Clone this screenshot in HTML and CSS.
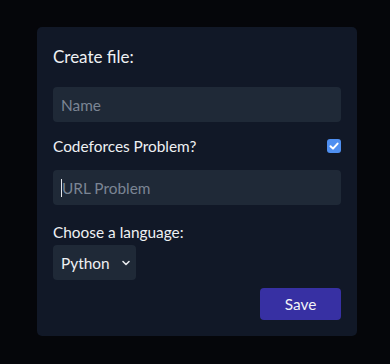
FILE: index.html
```html
<!DOCTYPE html>
<html>
<head>
<meta charset="utf-8">
<link rel="stylesheet" href="styles.css">
</head>
<body>
<div class="card">
  <h2 class="title">Create file:</h2>
  <input class="field" type="text" placeholder="Name">
  <label class="check-row">
    <span>Codeforces Problem?</span>
    <span class="checkbox">
      <svg viewBox="0 0 14 14" width="14" height="14"><path d="M3.5 7.2 L6 9.6 L10.6 4.6" fill="none" stroke="#fff" stroke-width="2" stroke-linecap="round" stroke-linejoin="round"/></svg>
    </span>
  </label>
  <div class="field url"><span class="caret"></span><span class="ph">URL Problem</span></div>
  <div class="label">Choose a language:</div>
  <div class="select">
    <span>Python</span>
    <svg viewBox="0 0 12 12" width="12" height="12"><path d="M3 4.5 L6 7.5 L9 4.5" fill="none" stroke="#e5e7eb" stroke-width="1.6" stroke-linecap="round" stroke-linejoin="round"/></svg>
  </div>
  <div class="actions"><button class="save">Save</button></div>
</div>
</body>
</html>
```
FILE: styles.css
```css
html, body {
  margin: 0;
  padding: 0;
  background: #05060a;
  height: 100%;
}
body {
  font-family: Lato, "Open Sans", sans-serif;
  color: #eef0f3;
  padding-top: 27px;
  padding-left: 37px;
  box-sizing: border-box;
}
.card {
  width: 320px;
  box-sizing: border-box;
  background: #111827;
  border-radius: 5px;
  padding: 16px 16px 16px 16px;
  display: flex;
  flex-direction: column;
}
.title {
  margin: 0;
  font-size: 17px;
  font-weight: 400;
  line-height: 28px;
  margin-bottom: 16px;
}
.field {
  display: block;
  width: 100%;
  height: 35px;
  box-sizing: border-box;
  background: #1f2937;
  border: none;
  border-radius: 4px;
  padding: 0 8px;
  font-family: inherit;
  font-size: 15.4px;
  color: #e5e7eb;
  outline: none;
}
.field::placeholder {
  color: #7b8594;
}
.check-row {
  display: flex;
  justify-content: space-between;
  align-items: center;
  height: 24px;
  margin: 12px 0 12px 0;
  font-size: 15.4px;
}
.checkbox {
  width: 14px;
  height: 14px;
  border-radius: 3px;
  background: #4f8ff0;
  display: flex;
  align-items: center;
  justify-content: center;
}
.url {
  display: flex;
  align-items: center;
}
.caret {
  width: 1px;
  height: 18px;
  background: #e5e7eb;
  margin-right: 0;
}
.ph {
  color: #7b8594;
}
.label {
  font-size: 15.4px;
  line-height: 24px;
  margin-top: 15px;
}
.select {
  margin-top: 1px;
  width: 83px;
  height: 35px;
  box-sizing: border-box;
  background: #1f2937;
  border-radius: 4px;
  padding: 0 4px 0 8px;
  display: flex;
  align-items: center;
  justify-content: space-between;
  font-size: 15.4px;
}
.actions {
  display: flex;
  justify-content: flex-end;
  margin-top: 8px;
}
.save {
  width: 81px;
  height: 32px;
  border: none;
  border-radius: 4px;
  background: #3730a3;
  color: #f3f4f6;
  font-family: inherit;
  font-size: 15.4px;
}
```
